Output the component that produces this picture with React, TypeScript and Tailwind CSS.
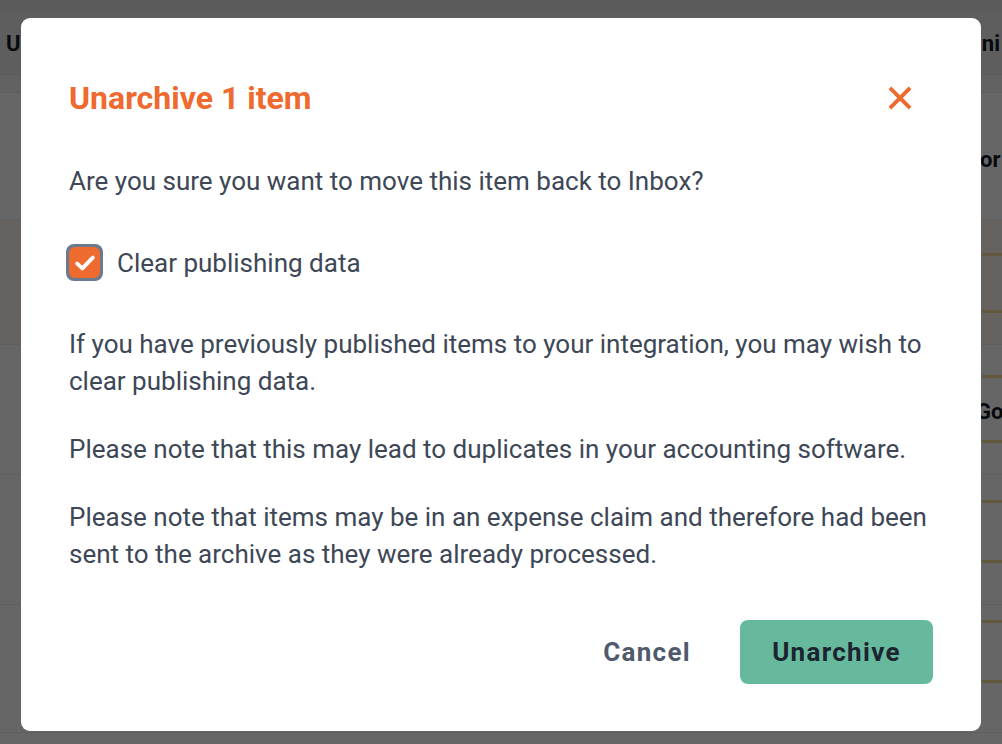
import { useState } from "react";

const rows = [
  { h: "h-[127px]", tint: "bg-white", right: "or", left: "left-[18px]", lines: [] as number[] },
  { h: "h-[125px]", tint: "bg-[#fff5f0]", right: "", left: "", lines: [33, 90] },
  { h: "h-[130px]", tint: "bg-white", right: "Go", left: "left-[14px]", lines: [30, 95] },
  { h: "h-[130px]", tint: "bg-white", right: "", left: "", lines: [25, 85] },
  { h: "h-[128px]", tint: "bg-white", right: "", left: "", lines: [15, 75] },
];

function Backdrop() {
  return (
    <div className="w-full h-[744px] bg-white overflow-hidden font-['Roboto',sans-serif]">
      <div className="h-[12px] bg-[#e4e4e4]" />
      <div className="h-[63px] bg-[#ececee] border-b border-[#e0e0e0] flex items-center justify-between pl-[6px] pr-[2px]">
        <span className="text-[22px] font-bold text-[#111827]">Unit</span>
        <span className="text-[22px] font-bold text-[#111827]">Admini</span>
      </div>
      <div className="h-[18px] bg-[#f4f4f4] border-b border-[#e6e6e6]" />
      {rows.map((r, i) => (
        <div key={i} className={`${r.h} ${r.tint} border-b border-[#ececec] flex justify-end`}>
          <div className="w-[40px] flex flex-col relative">
            {r.right && (
              <span className={`absolute ${r.left} top-[50px] text-[22px] font-bold text-[#111827]`}>
                {r.right}
              </span>
            )}
            {r.lines.map((t) => (
              <div key={t} className="absolute left-[20px] right-0 h-[3px] bg-[#f5dc9a]" style={{ top: t }} />
            ))}
          </div>
        </div>
      ))}
    </div>
  );
}

export default function App() {
  const [checked, setChecked] = useState(true);

  return (
    <div className="relative w-[1002px] h-[744px] overflow-hidden">
      <Backdrop />

      {/* overlay */}
      <div className="absolute inset-0 bg-black/60 flex items-start justify-center pt-[18px]">
        <div className="w-[960px] h-[713px] bg-white rounded-[9px] px-[48px] pt-[62px] font-['Roboto',sans-serif] text-[#3d4756]">
          <div className="flex items-center justify-between">
            <h2 className="text-[32px] font-bold text-[#ee6a2e] leading-[36px]">
              Unarchive 1 item
            </h2>
            <button className="w-[28px] h-[28px] flex items-center justify-center mr-[19px] text-[#ee6a2e]">
              <svg width="26" height="26" viewBox="0 0 24 24" fill="none" stroke="currentColor" strokeWidth="3.6" strokeLinecap="square">
                <path d="M4 4L20 20M20 4L4 20" />
              </svg>
            </button>
          </div>

          <p className="mt-[47px] text-[26px] leading-[36px]">
            Are you sure you want to move this item back to Inbox?
          </p>

          <label className="mt-[45px] flex items-center gap-[14px] cursor-pointer select-none">
            <span
              onClick={() => setChecked(!checked)}
              className="w-[37px] h-[37px] -ml-[3px] rounded-[8px] bg-[#6c7a90] p-[3px] flex"
            >
              <span className={`flex-1 rounded-[6px] flex items-center justify-center ${checked ? "bg-[#ee6a2e]" : "bg-white"}`}>
                {checked && (
                  <svg width="24" height="24" viewBox="0 0 20 20" fill="none" stroke="white" strokeWidth="3.2" strokeLinecap="round" strokeLinejoin="round">
                    <path d="M3.5 10.5L7.8 14.5L16.5 5.5" />
                  </svg>
                )}
              </span>
            </span>
            <span className="text-[26px] leading-[36px]">Clear publishing data</span>
          </label>

          <p className="mt-[45px] text-[26px] leading-[37px]">
            If you have previously published items to your integration, you may wish to clear publishing data.
          </p>
          <p className="mt-[31px] text-[26px] leading-[37px]">
            Please note that this may lead to duplicates in your accounting software.
          </p>
          <p className="mt-[31px] text-[26px] leading-[37px]">
            Please note that items may be in an expense claim and therefore had been sent to the archive as they were already processed.
          </p>

          <div className="mt-[47px] flex items-center justify-end gap-[49px]">
            <button className="text-[26px] font-bold tracking-[0.05em] text-[#4f5b6d]">Cancel</button>
            <button className="w-[193px] h-[64px] rounded-[8px] bg-[#66b99d] text-[26px] font-bold tracking-[0.05em] text-[#1c2430]">
              Unarchive
            </button>
          </div>
        </div>
      </div>
    </div>
  );
}
